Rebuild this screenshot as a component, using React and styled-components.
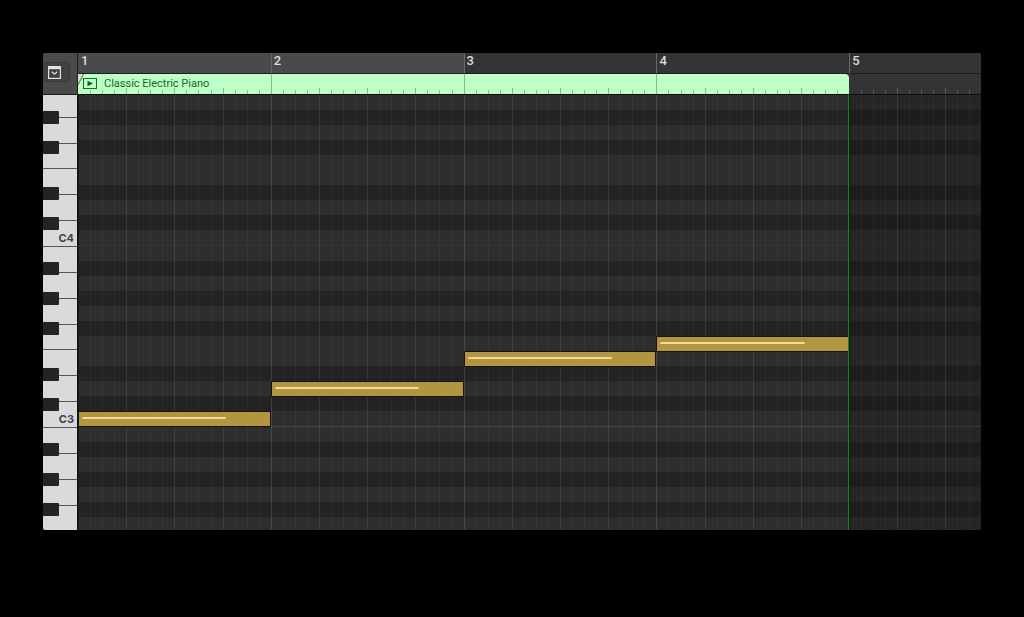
import React from "react";
import styled, { createGlobalStyle } from "styled-components";

// pitch names from the top of an octave down
const PITCHES = ["B", "A#", "A", "G#", "G", "F#", "F", "E", "D#", "D", "C#", "C"];
const WHITE = PITCHES.filter((p) => !p.includes("#"));

const OCTAVES = [
  { number: 4, height: 151, clip: "flex-end", label: "C4" },
  { number: 3, height: 181, clip: "flex-start", label: "C3" },
  { number: 2, height: 103, clip: "flex-start" },
];

const BARS = [
  { number: 1, steps: 16, active: true, inRegion: true },
  { number: 2, steps: 16, active: true, inRegion: true },
  { number: 3, steps: 16, inRegion: true },
  { number: 4, steps: 16, inRegion: true },
  { number: 5, steps: 11 },
];

const NOTES = [
  { pitch: "C", octave: 3, bar: 1 },
  { pitch: "D", octave: 3, bar: 2 },
  { pitch: "E", octave: 3, bar: 3 },
  { pitch: "F", octave: 3, bar: 4 },
];

const range = (n) => Array.from({ length: n }, (_, i) => i);

const App = () => {
  return (
    <>
      <GlobalStyle />
      <Editor>
        <Header>
          <Corner>
            <MenuButton type="button" aria-label="Editor options">
              <svg width="13" height="13" viewBox="0 0 13 13" fill="none">
                <rect x="0.6" y="0.6" width="11.8" height="11.8" stroke="#e2e2e2" strokeWidth="1.2" />
                <rect x="0.6" y="0.6" width="11.8" height="2.6" fill="#e2e2e2" />
                <path d="M3.8 5.8 6.5 8.3l2.7-2.5" stroke="#e2e2e2" strokeWidth="1.2" />
              </svg>
            </MenuButton>
          </Corner>
          <Timeline>
            <Ruler>
              {BARS.map((bar) => (
                <BarLabel
                  key={bar.number}
                  $active={bar.active}
                  $first={bar.number === 1}
                >
                  {bar.number}
                </BarLabel>
              ))}
            </Ruler>
            <RegionLane>
              <Region>
                <svg width="26" height="20" viewBox="0 0 26 20" fill="none">
                  <path d="M0 0H5L0 11Z" fill="#dcdcdc" />
                  <path d="M5.5 0 0 11" stroke="#4b6b50" strokeWidth="1" />
                  <rect x="5.5" y="4.5" width="13" height="10" stroke="#14701f" />
                  <path d="M9.5 6.8 15 9.5 9.5 12.2Z" fill="#0d5c17" />
                </svg>
                <RegionName>Classic Electric Piano</RegionName>
              </Region>
              <TickLayer>
                {BARS.map((bar) => (
                  <Steps key={bar.number}>
                    {range(bar.steps).map((step) => (
                      <Tick key={step} $step={step} $inRegion={bar.inRegion} />
                    ))}
                  </Steps>
                ))}
              </TickLayer>
            </RegionLane>
          </Timeline>
        </Header>
        <Roll>
          <Keyboard>
            {OCTAVES.map((octave) => (
              <OctaveClip key={octave.number} $height={octave.height} $clip={octave.clip}>
                <OctaveKeys>
                  <WhiteKeys>
                    {WHITE.map((pitch) => (
                      <WhiteKey key={pitch}>{pitch === "C" ? octave.label : null}</WhiteKey>
                    ))}
                  </WhiteKeys>
                  <BlackKeys>
                    {PITCHES.map((pitch, i) =>
                      pitch.includes("#") ? <BlackKey key={pitch} $row={i + 1} /> : null
                    )}
                  </BlackKeys>
                </OctaveKeys>
              </OctaveClip>
            ))}
          </Keyboard>
          <Canvas>
            <Lanes>
              {OCTAVES.map((octave) => (
                <OctaveClip key={octave.number} $height={octave.height} $clip={octave.clip}>
                  <OctaveLanes $strong={octave.number === 3}>
                    {PITCHES.map((pitch) => (
                      <Lane key={pitch} $sharp={pitch.includes("#")} />
                    ))}
                  </OctaveLanes>
                </OctaveClip>
              ))}
            </Lanes>
            <GridLines>
              {BARS.map((bar) => (
                <GridBar key={bar.number} $inRegion={bar.inRegion}>
                  {range(bar.steps).map((step) => (
                    <GridStep key={step} $step={step} $inRegion={bar.inRegion} />
                  ))}
                </GridBar>
              ))}
            </GridLines>
            <NoteLayer>
              {OCTAVES.map((octave) => (
                <OctaveClip key={octave.number} $height={octave.height} $clip={octave.clip}>
                  <OctaveNotes>
                    {NOTES.filter((note) => note.octave === octave.number).map((note) => (
                      <Note
                        key={note.bar}
                        $bar={note.bar}
                        $row={PITCHES.indexOf(note.pitch) + 1}
                      >
                        <Velocity />
                      </Note>
                    ))}
                  </OctaveNotes>
                </OctaveClip>
              ))}
            </NoteLayer>
            <EndLayer>
              <RegionEnd />
            </EndLayer>
          </Canvas>
        </Roll>
      </Editor>
    </>
  );
};

const GlobalStyle = createGlobalStyle`
  * {
    box-sizing: border-box;
  }
  body {
    margin: 0;
    background: #000;
    font-family: Inter, "Liberation Sans", sans-serif;
  }
`;
const Editor = styled.main`
  margin: 53px 43px 0 43px;
  overflow: hidden;
  border-radius: 2px;
  background: #2e2e2e;
`;
const Header = styled.header`
  display: flex;
  height: 42px;
`;
const Corner = styled.div`
  flex: 0 0 35px;
  padding-top: 9px;
  background: #4a4a4a;
  border-right: 1px solid #1c1c1c;
  border-bottom: 1px solid #1c1c1c;
`;
const MenuButton = styled.button`
  display: flex;
  align-items: center;
  width: 27px;
  height: 20px;
  padding: 0 0 0 5px;
  border: 1px solid #3a3a3a;
  border-left: 0;
  border-radius: 0 4px 4px 0;
  background: #414141;
`;
const Timeline = styled.div`
  flex: 1;
  min-width: 0;
`;
// the fifth bar is cut off by the right edge of the editor
const BarGrid = styled.div`
  display: grid;
  grid-template-columns: repeat(4, 60fr) 41fr;
`;
const Ruler = styled(BarGrid)`
  height: 21px;
`;
const BarLabel = styled.div`
  padding: 0 2px;
  font-family: Roboto, "Liberation Sans", sans-serif;
  font-size: 13px;
  font-weight: 500;
  line-height: 15px;
  color: #dcdcdc;
  background: ${(props) => (props.$active ? "#4a4a4a" : "#343434")};
  border-left: 1px solid ${(props) => (props.$first ? "transparent" : "#686868")};
  border-bottom: 1px solid #1c1c1c;
`;
const RegionLane = styled(BarGrid)`
  height: 21px;
  background: #343434;
  border-bottom: 1px solid #0c0c0c;
`;
const Region = styled.div`
  grid-area: 1 / 1 / 2 / 5;
  display: flex;
  overflow: hidden;
  border-radius: 0 4px 0 0;
  background: #bdffc6;
`;
const RegionName = styled.span`
  font-family: Roboto, "Liberation Sans", sans-serif;
  font-size: 11px;
  line-height: 19px;
  color: #16691f;
`;
const TickLayer = styled(BarGrid)`
  grid-area: 1 / 1 / 2 / 6;
`;
const Steps = styled.div`
  display: flex;
  align-items: flex-end;
`;
const Tick = styled.div`
  flex: 1;
  height: ${(props) => (props.$step === 0 ? "20px" : props.$step % 4 ? "4px" : "6px")};
  border-left: 1px solid
    ${(props) => (props.$inRegion ? "rgba(60, 140, 75, 0.5)" : "#585858")};
  ${Steps}:first-child > &:first-child, ${Steps}:last-child > &:first-child {
    border-color: transparent;
  }
`;
const Roll = styled.div`
  display: flex;
`;
const Keyboard = styled.div`
  flex: 0 0 35px;
  border-right: 1px solid #101010;
`;
const OctaveClip = styled.div`
  display: flex;
  flex-direction: column;
  justify-content: ${(props) => props.$clip};
  height: ${(props) => props.$height}px;
  overflow: hidden;
`;
const OctaveKeys = styled.div`
  flex: 0 0 181px;
  display: grid;
`;
const WhiteKeys = styled.div`
  grid-area: 1 / 1;
  display: grid;
  grid-template-rows: repeat(7, 1fr);
`;
const WhiteKey = styled.div`
  display: flex;
  align-items: center;
  justify-content: flex-end;
  padding: 9px 3px 0 0;
  font-size: 11px;
  font-weight: 700;
  line-height: 12px;
  color: #444;
  background: #dadadc;
  border-top: 1px solid #555;
`;
const BlackKeys = styled.div`
  grid-area: 1 / 1;
  display: grid;
  grid-template-rows: repeat(12, 1fr);
`;
const BlackKey = styled.div`
  grid-row: ${(props) => props.$row};
  align-self: center;
  width: 16px;
  height: 13px;
  border-radius: 0 1px 1px 0;
  background: #242424;
`;
const Canvas = styled.div`
  flex: 1;
  min-width: 0;
  display: grid;
`;
const Lanes = styled.div`
  grid-area: 1 / 1;
`;
const OctaveLanes = styled.div`
  flex: 0 0 181px;
  display: grid;
  grid-template-rows: repeat(12, 1fr);
  border-bottom: 1px solid ${(props) => (props.$strong ? "#444" : "#363636")};
`;
const Lane = styled.div`
  background: ${(props) => (props.$sharp ? "#232323" : "#2e2e2e")};
`;
const GridLines = styled(BarGrid)`
  grid-area: 1 / 1;
`;
const GridBar = styled.div`
  display: flex;
  background: ${(props) => (props.$inRegion ? "none" : "rgba(0, 0, 0, 0.17)")};
`;
const GridStep = styled.div`
  flex: 1;
  border-left: 1px solid
    ${(props) =>
      props.$step === 0
        ? props.$inRegion
          ? "rgba(255, 255, 255, 0.13)"
          : "#161616"
        : props.$step % 4
          ? "rgba(255, 255, 255, 0.04)"
          : "rgba(255, 255, 255, 0.09)"};
  ${GridBar}:first-child > &:first-child {
    border-color: #161616;
  }
`;
const NoteLayer = styled.div`
  grid-area: 1 / 1;
`;
// notes overlap the lane line above them
const OctaveNotes = styled(BarGrid)`
  flex: 0 0 181px;
  margin-top: -1px;
  grid-template-rows: repeat(12, 1fr);
`;
const Note = styled.div`
  grid-row: ${(props) => props.$row};
  grid-column: ${(props) => props.$bar};
  display: flex;
  align-items: center;
  margin-bottom: -1px;
  padding: 0 3px;
  background: #b3953f;
  border: 1px solid #171309;
`;
const Velocity = styled.div`
  width: 78%;
  height: 2px;
  margin-bottom: 1px;
  border-radius: 1px;
  background: #f0d9a0;
`;
const EndLayer = styled(BarGrid)`
  grid-area: 1 / 1;
`;
const RegionEnd = styled.div`
  grid-column: 4;
  justify-self: end;
  width: 1px;
  background: #128a2b;
`;

export default App;
